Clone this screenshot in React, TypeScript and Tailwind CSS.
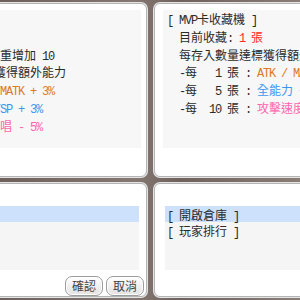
import React from 'react';

type Seg = { t: string; c?: string };

const INK = 'text-[#2b2b2b]';
const ORANGE = 'text-[#dd7a22]';
const BLUE = 'text-[#3c96f0]';
const PINK = 'text-[#ff64ae]';
const RED = 'text-[#ff2a2a]';

// half-width runs go in a mono face (6px cells), the rest in the CJK face (12px cells)
function Txt({ text }: { text: string }) {
  const parts = text.match(/[\x00-\x7f]+|[^\x00-\x7f]+/g) ?? [];
  return (
    <>
      {parts.map((p, i) =>
        /^[\x00-\x7f]/.test(p) ? (
          <span key={i} className="font-['Liberation_Mono',monospace] text-[12px] tracking-[-1.2px]">
            {p}
          </span>
        ) : (
          <span key={i} className="font-['Noto_Sans_CJK_TC',sans-serif] text-[12px]">
            {p}
          </span>
        )
      )}
    </>
  );
}

function Line({ segs }: { segs: Seg[] }) {
  return (
    <div className="whitespace-pre h-[17.8px] leading-[17.8px]">
      {segs.map((s, i) => (
        <span key={i} className={s.c ?? INK}>
          <Txt text={s.t} />
        </span>
      ))}
    </div>
  );
}

const leftLines: Seg[][] = [
  [{ t: '[ MVP卡收藏機 ]' }],
  [{ t: '  目前收藏: 5 張' }],
  [{ t: '    卡片效果: 負重增加 10' }],
  [{ t: '   存入數量達標獲得額外能力' }],
  [{ t: '  -每 1 張: ' }, { t: 'ATK/MATK + 3%', c: ORANGE }],
  [{ t: '  -每 5 張:  ' }, { t: 'HP/SP + 3%', c: BLUE }],
  [{ t: '  -每 10 張:  ' }, { t: '詠唱 - 5%', c: PINK }],
];

const rightLines: Seg[][] = [
  [{ t: '[ MVP卡收藏機 ]' }],
  [{ t: '  目前收藏: ' }, { t: '1 張', c: RED }],
  [{ t: '  每存入數量達標獲得額外能力' }],
  [{ t: '  -每   1 張 : ' }, { t: 'ATK / MATK + 3%', c: ORANGE }],
  [{ t: '  -每   5 張 : ' }, { t: '全能力 + 1', c: BLUE }],
  [{ t: '  -每  10 張 : ' }, { t: '攻擊速度 + 10%', c: PINK }],
];

function InfoPanel({ lines }: { lines: Seg[][] }) {
  return (
    <div className="h-[174px] bg-white border border-[#b4b4b4] rounded-[6px] shadow-[0_0_0_1px_#e4e4e4] pt-[6px] pl-[8px] pr-[5px]">
      <div className="h-[138px] bg-[#f7f7f7] pl-[4px] overflow-hidden">
        {lines.map((l, i) => (
          <Line key={i} segs={l} />
        ))}
      </div>
    </div>
  );
}

function Button({ label }: { label: string }) {
  return (
    <button className="w-[38px] h-[20px] rounded-[7px] border border-[#9c9c9c] bg-[linear-gradient(#ffffff,#e2e2e2)] shadow-[inset_0_0_0_1px_#ffffff] text-[#444] text-[12px] leading-[18px] font-['Noto_Sans_CJK_TC',sans-serif]">
      {label}
    </button>
  );
}

function MenuPanel({ items, buttons }: { items: string[]; buttons?: boolean }) {
  return (
    <div className="h-[114px] bg-white border border-[#b4b4b4] rounded-[6px] shadow-[0_0_0_1px_#e4e4e4] pt-[22px] pl-[10px] pr-[2px] flex flex-col">
      <div className="h-[64px] bg-[#f5f5f5] mr-[5px]">
        {items.map((it, i) => (
          <div
            key={i}
            className={`h-[16px] leading-[16px] pl-[2px] whitespace-pre ${INK} ${i === 0 ? 'bg-[#cde0fc]' : ''}`}
          >
            <Txt text={it} />
          </div>
        ))}
      </div>
      {buttons && (
        <div className="mt-[6px] flex justify-end gap-[3px]">
          <Button label="確認" />
          <Button label="取消" />
        </div>
      )}
    </div>
  );
}

export default function App() {
  return (
    <div className="w-[300px] h-[300px] overflow-hidden bg-[linear-gradient(90deg,#6e615b,#857772_45%,#6f625d_60%,#8a7d76)]">
      <div className="ml-[-109px] mt-[3px] grid grid-cols-[256px_256px] gap-x-[7px] gap-y-[6px]">
        <InfoPanel lines={leftLines} />
        <InfoPanel lines={rightLines} />
        <MenuPanel items={['[ 存入卡片 ]', '[ 取回卡片 ]']} buttons />
        <MenuPanel items={['[ 開啟倉庫 ]', '[ 玩家排行 ]']} />
      </div>
    </div>
  );
}
